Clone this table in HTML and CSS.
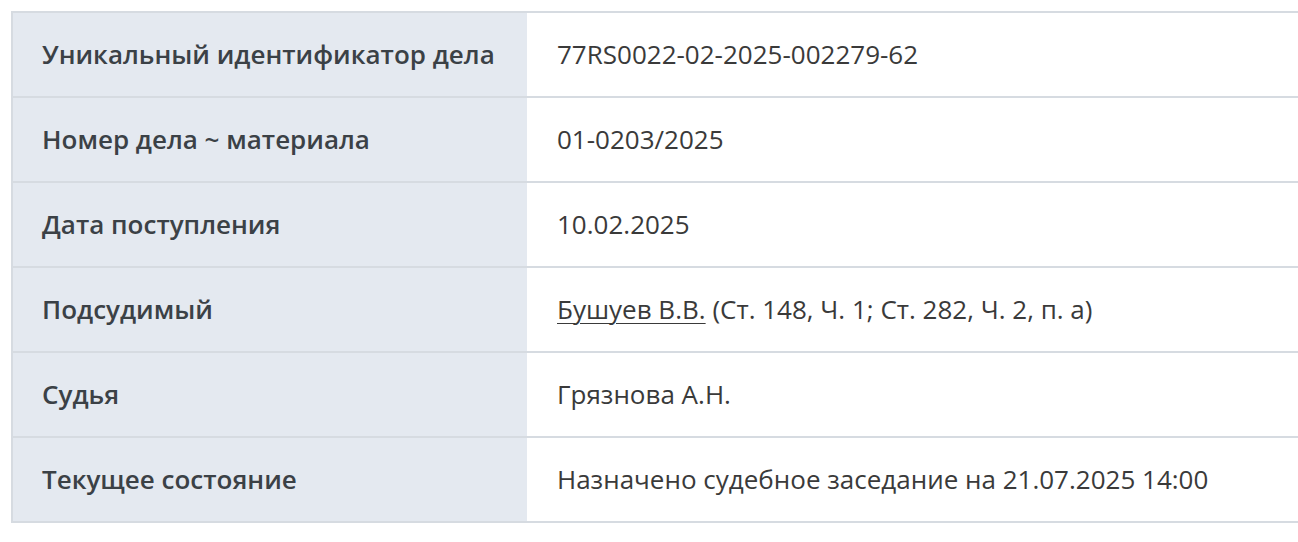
FILE: index.html
```html
<!DOCTYPE html>
<html lang="ru">
<head>
<meta charset="utf-8">
<title>Дело</title>
<link rel="stylesheet" href="styles.css">
</head>
<body>
<table class="case">
  <tbody>
    <tr><th>Уникальный идентификатор дела</th><td>77RS0022-02-2025-002279-62</td></tr>
    <tr><th>Номер дела ~ материала</th><td>01-0203/2025</td></tr>
    <tr><th>Дата поступления</th><td>10.02.2025</td></tr>
    <tr><th>Подсудимый</th><td><a href="#" class="person">Бушуев В.В.</a> (Ст. 148, Ч. 1; Ст. 282, Ч. 2, п. а)</td></tr>
    <tr><th>Судья</th><td>Грязнова А.Н.</td></tr>
    <tr><th>Текущее состояние</th><td>Назначено судебное заседание на 21.07.2025 14:00</td></tr>
  </tbody>
</table>
</body>
</html>
```
FILE: styles.css
```css
html, body {
  margin: 0;
  padding: 0;
  background: #ffffff;
  overflow: hidden;
}
body {
  padding: 11px 0 0 11px;
  font-family: "Open Sans", "Noto Sans", sans-serif;
}
.case {
  border-collapse: collapse;
  width: 1300px;
  border: 2px solid #d6dbe1;
}
.case th,
.case td {
  height: 81px;
  padding: 0 30px 2px;
  border-bottom: 2px solid #d6dbe1;
  font-size: 26px;
  text-align: left;
  vertical-align: middle;
  box-sizing: content-box;
}
.case th {
  width: 455px;
  background: #e4e9f0;
  color: #3b4146;
  font-weight: 600;
  padding-left: 29px;
}
.case td {
  color: #3a3a3a;
  font-weight: 400;
  padding-left: 30px;
}
.person {
  color: #3a3a3a;
  text-decoration: underline;
  text-underline-offset: 4px;
  text-decoration-thickness: 1px;
}
```
